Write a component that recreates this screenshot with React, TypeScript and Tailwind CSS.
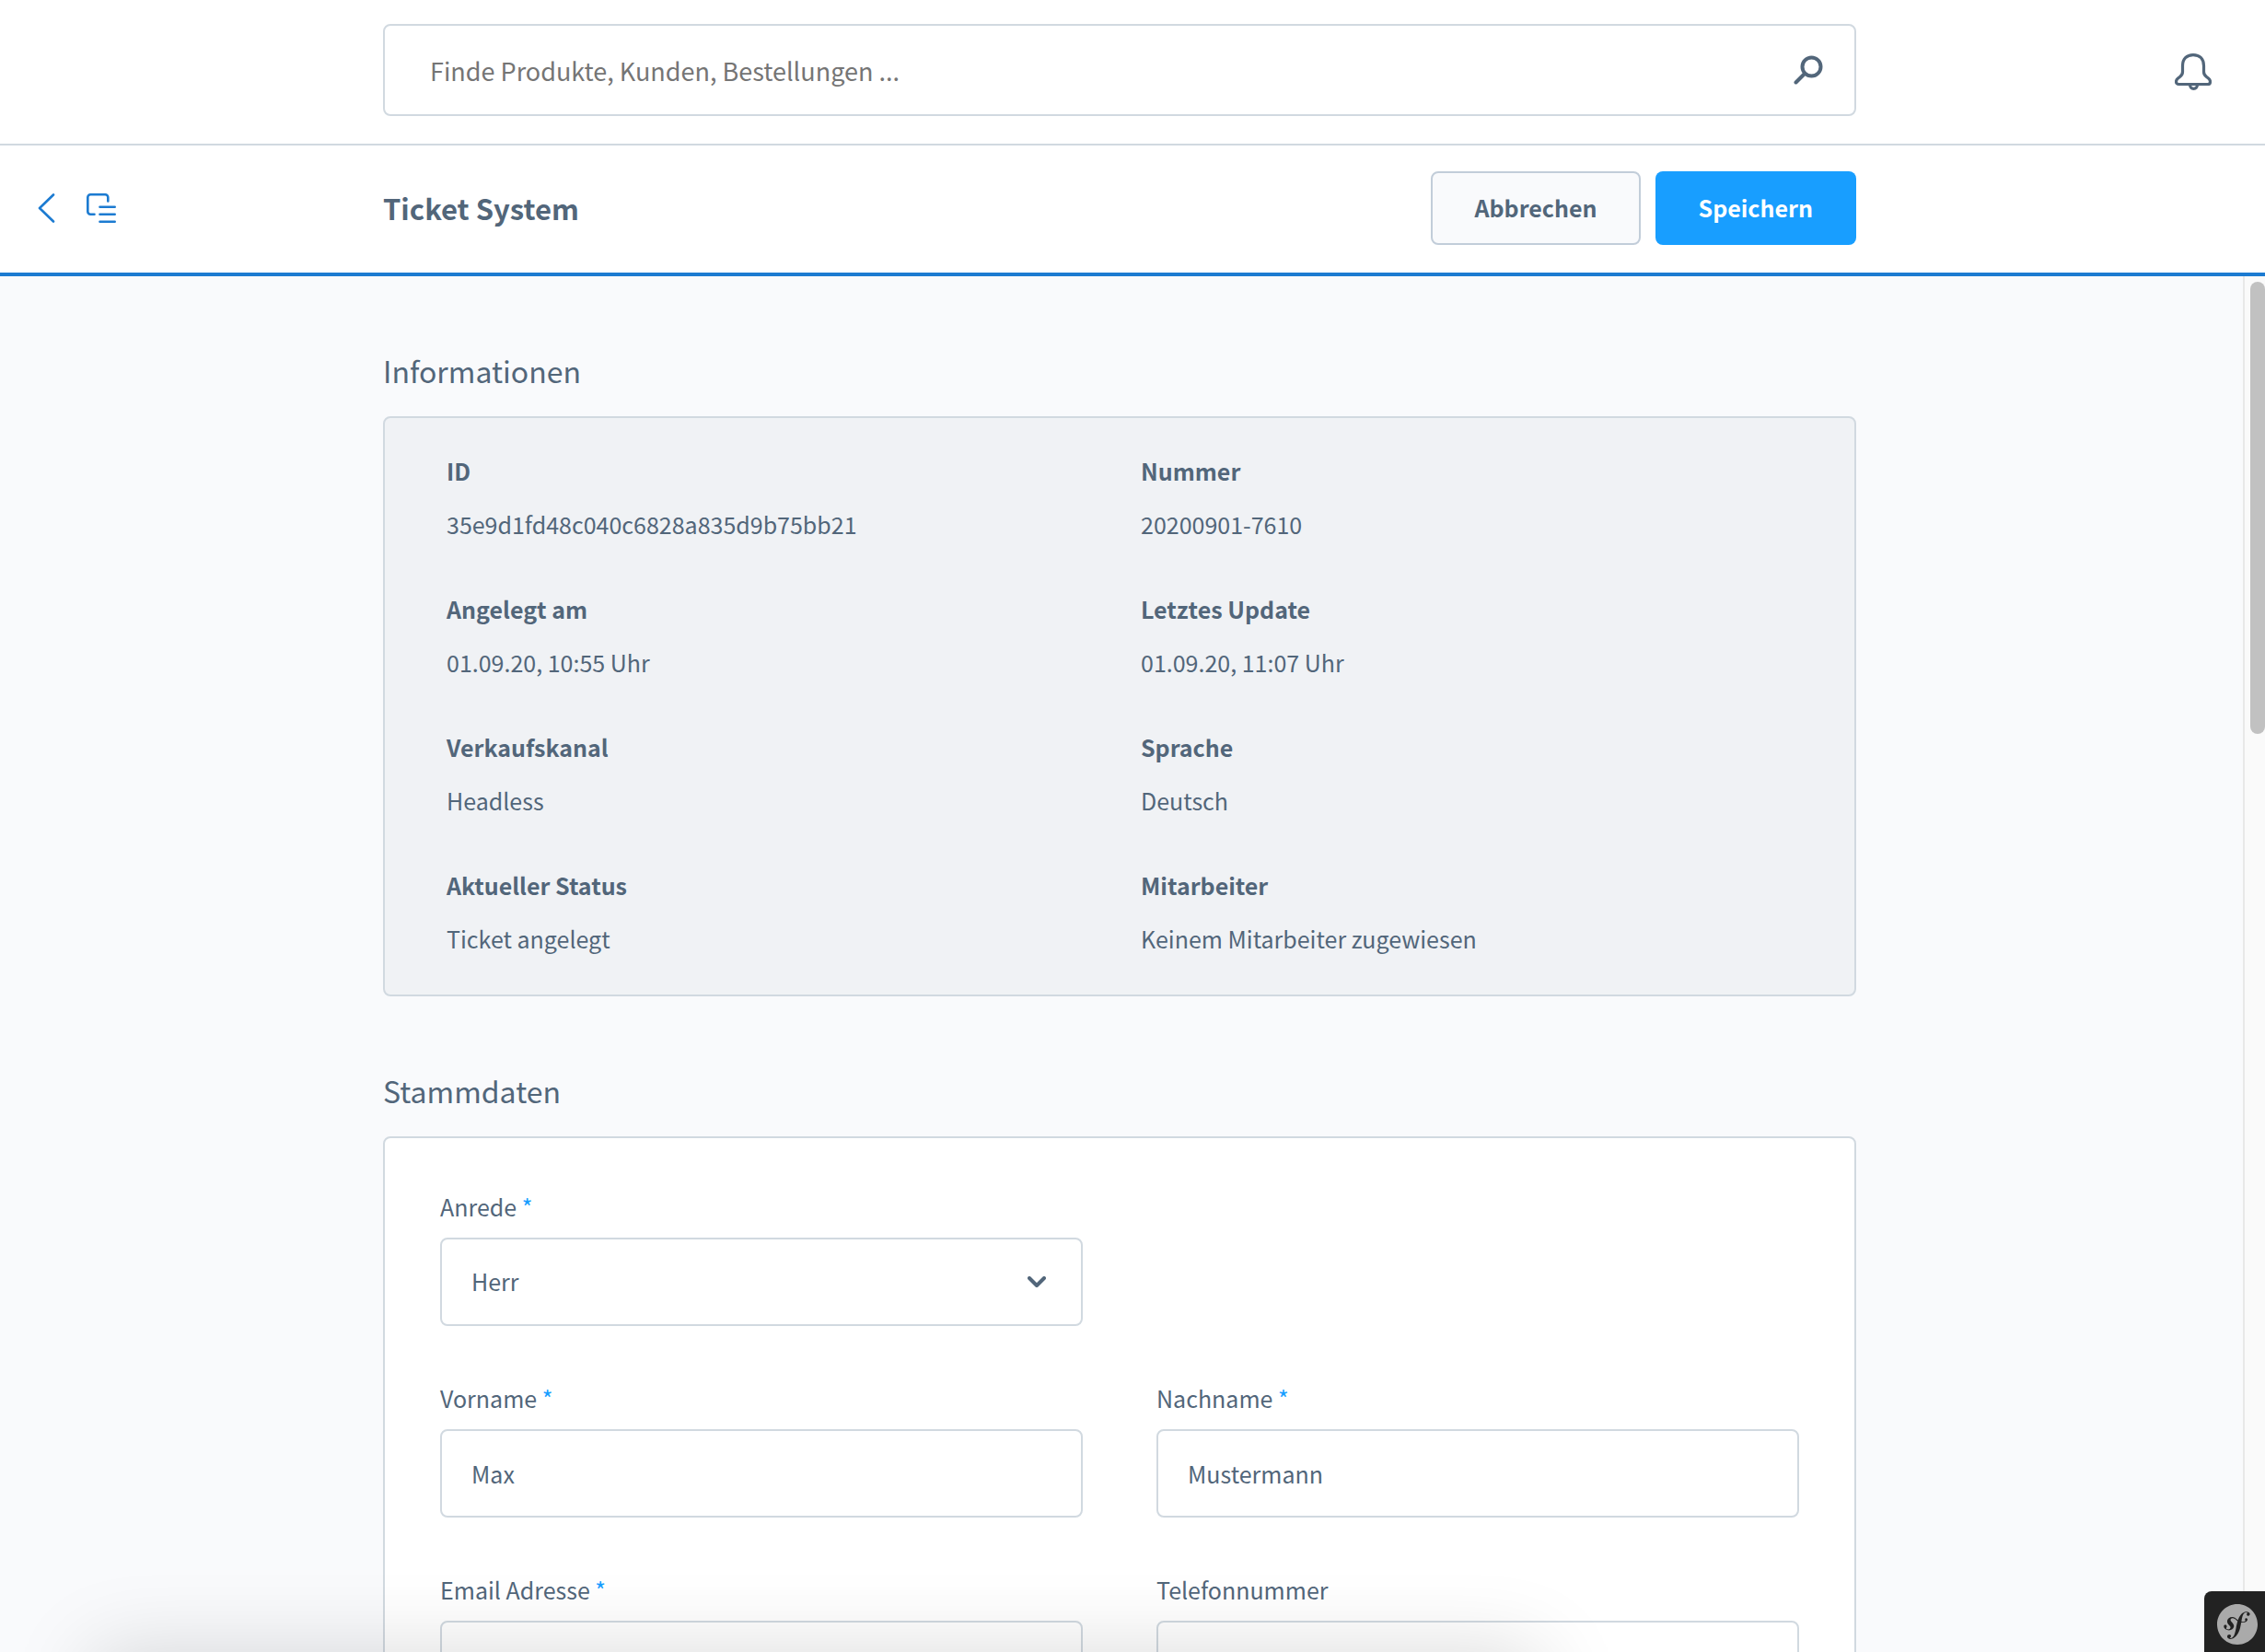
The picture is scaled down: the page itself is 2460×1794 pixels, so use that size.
import type { ReactNode } from 'react';
import { SiSymfony } from 'react-icons/si';

const details = [
  { label: 'ID', value: '35e9d1fd48c040c6828a835d9b75bb21' },
  { label: 'Nummer', value: '20200901-7610' },
  { label: 'Angelegt am', value: '01.09.20, 10:55 Uhr' },
  { label: 'Letztes Update', value: '01.09.20, 11:07 Uhr' },
  { label: 'Verkaufskanal', value: 'Headless' },
  { label: 'Sprache', value: 'Deutsch' },
  { label: 'Aktueller Status', value: 'Ticket angelegt' },
  { label: 'Mitarbeiter', value: 'Keinem Mitarbeiter zugewiesen' },
];

const control =
  'h-24 w-full rounded-lg border-2 border-[#d1d9e0] bg-transparent px-8 text-[25px] text-[#52667a] outline-none focus:border-[#189eff]';

function SearchIcon() {
  return (
    <svg viewBox="0 0 32 32" className="size-8" fill="none" stroke="#52667a" strokeWidth="4" strokeLinecap="round">
      <circle cx="19.5" cy="12.5" r="10" />
      <path d="M12 20 2.5 29.5" />
    </svg>
  );
}

function BellIcon() {
  return (
    <svg viewBox="0 0 40 40" className="size-10" fill="none" stroke="#52667a" strokeWidth="3.200" strokeLinejoin="round">
      <path d="M8.500 13.500C8.500 6 13 1.600 20 1.600S31.500 6 31.500 13.500V20c0 2.500 1 4 3 5.500l2 1.500c1.300 1 2 2.200 2 3.700 0 1.700-1.100 2.800-2.800 2.800H4.300c-1.700 0-2.800-1.100-2.800-2.800 0-1.500.7-2.700 2-3.700l2-1.500c2-1.500 3-3 3-5.500Z" />
      <path d="M16.500 34c0 2.700 1.700 4.400 4 4.400s4-1.700 4-4.400" />
    </svg>
  );
}

function BackIcon() {
  return (
    <svg viewBox="0 0 20 32" className="h-8 w-5" fill="none" stroke="#1c7bd1" strokeWidth="2.600" strokeLinecap="round" strokeLinejoin="round">
      <path d="M18 1.500 3 16l15 14.500" />
    </svg>
  );
}

function TreeIcon() {
  return (
    <svg viewBox="0 0 32 32" className="size-8" fill="none" stroke="#1c7bd1" strokeWidth="2.600" strokeLinecap="round">
      <path d="M8.500 22.700H4.300a3 3 0 0 1-3-3V4.300a3 3 0 0 1 3-3h16a3 3 0 0 1 3 3v4.200" />
      <path d="M14.500 14.700h16.200M14.500 22.700h16.200M14.500 30.700h16.200" />
    </svg>
  );
}

function Field({ id, label, required, children }: { id: string; label: string; required?: boolean; children: ReactNode }) {
  return (
    <div>
      <label htmlFor={id} className="mb-5 block text-[25px] leading-7">
        {label}
        {required && <span className="text-[#189eff]"> *</span>}
      </label>
      {children}
    </div>
  );
}

export default function App() {
  return (
    <div className="relative flex h-screen flex-col overflow-hidden bg-[#f9fafc] font-['Noto_Sans_CJK_SC','Noto_Sans',sans-serif] text-[25px] text-[#52667a]">
      <header className="grid shrink-0 grid-cols-[1fr_minmax(0,1600px)_1fr] items-center border-b-2 border-[#d1d9e0] bg-white pt-[26px] pr-7 pb-[30px]">
        <form role="search" className="relative col-start-2">
          <input
            type="search"
            aria-label="Suche"
            placeholder="Finde Produkte, Kunden, Bestellungen ..."
            className="h-[100px] w-full rounded-lg border-2 border-[#d1d9e0] px-[49px] text-[27px] outline-none placeholder:text-[#757575]"
          />
          <button type="submit" aria-label="Suchen" className="absolute inset-y-0 right-9 flex items-center">
            <SearchIcon />
          </button>
        </form>
        <button type="button" aria-label="Benachrichtigungen" className="mr-[30px] justify-self-end pt-1">
          <BellIcon />
        </button>
      </header>

      <div className="grid shrink-0 grid-cols-[1fr_minmax(0,1600px)_1fr] items-center border-b-4 border-[#1c7bd1] bg-white pt-7 pr-7 pb-[30px]">
        <nav aria-label="Navigation" className="flex items-center gap-[34px] pl-10">
          <a href="#zurueck" aria-label="Zurück">
            <BackIcon />
          </a>
          <a href="#struktur" aria-label="Struktur">
            <TreeIcon />
          </a>
        </nav>
        <div className="flex items-center justify-between">
          <h1 className="text-[31px] font-semibold">Ticket System</h1>
          <div className="flex gap-4 text-[25px] font-semibold">
            <button type="button" className="h-20 rounded-lg border-2 border-[#c2cdd9] bg-[#f9fafc] px-[45px]">
              Abbrechen
            </button>
            <button type="button" className="h-20 rounded-lg bg-[#189eff] px-[47px] text-white">
              Speichern
            </button>
          </div>
        </div>
      </div>

      <div className="flex min-h-0 flex-1">
        <main className="min-w-0 flex-1 overflow-hidden pt-20 pr-1">
          <div className="mx-auto max-w-[1600px]">
            <section>
              <h2 className="mb-7 text-[32px] leading-11">Informationen</h2>
              <dl className="grid grid-cols-2 gap-y-[34px] rounded-lg border-2 border-[#d1d9e0] bg-[#f0f2f5] pt-7 pr-[21px] pb-8 pl-[67px]">
                {details.map(({ label, value }) => (
                  <div key={label} className="leading-[58px]">
                    <dt className="font-semibold">{label}</dt>
                    <dd>{value}</dd>
                  </div>
                ))}
              </dl>
            </section>

            <section className="mt-20">
              <h2 className="mb-7 text-[32px] leading-11">Stammdaten</h2>
              <form className="grid grid-cols-2 gap-x-20 gap-y-16 rounded-lg border-2 border-[#d1d9e0] bg-white p-[60px]">
                <Field id="anrede" label="Anrede" required>
                  <div className="relative">
                    <select id="anrede" defaultValue="Herr" className={`${control} appearance-none`}>
                      <option>Herr</option>
                      <option>Frau</option>
                    </select>
                    <svg
                      viewBox="0 0 20 12"
                      className="pointer-events-none absolute top-[42px] right-10 h-3 w-5"
                      fill="none"
                      stroke="#52667a"
                      strokeWidth="4"
                      strokeLinecap="round"
                      strokeLinejoin="round"
                    >
                      <path d="m2 2 8 8 8-8" />
                    </svg>
                  </div>
                </Field>
                <div className="col-start-1">
                  <Field id="vorname" label="Vorname" required>
                    <input id="vorname" type="text" defaultValue="Max" className={control} />
                  </Field>
                </div>
                <Field id="nachname" label="Nachname" required>
                  <input id="nachname" type="text" defaultValue="Mustermann" className={control} />
                </Field>
                <Field id="email" label="Email Adresse" required>
                  <input id="email" type="email" className={control} />
                </Field>
                <Field id="telefon" label="Telefonnummer">
                  <input id="telefon" type="tel" className={control} />
                </Field>
              </form>
            </section>
          </div>
        </main>
        <div aria-hidden="true" className="w-6 border-l-2 border-[#e8e8e8] bg-[#fafafa] pt-1.5 pl-1.5">
          <div className="h-[33%] rounded-full bg-[#c1c1c1]" />
        </div>
      </div>

      <div
        aria-hidden="true"
        className="pointer-events-none absolute top-full right-[32%] left-[100px] h-40 shadow-[0_0_90px_rgba(0,0,0,0.15)]"
      />

      <button
        type="button"
        aria-label="Symfony Toolbar"
        className="absolute right-0 bottom-0 flex h-[66px] w-[66px] items-center justify-center rounded-tl-lg bg-[#222222] pt-1.5 pl-1.5"
      >
        <SiSymfony className="size-11 text-[#aaaaaa]" />
      </button>
    </div>
  );
}
